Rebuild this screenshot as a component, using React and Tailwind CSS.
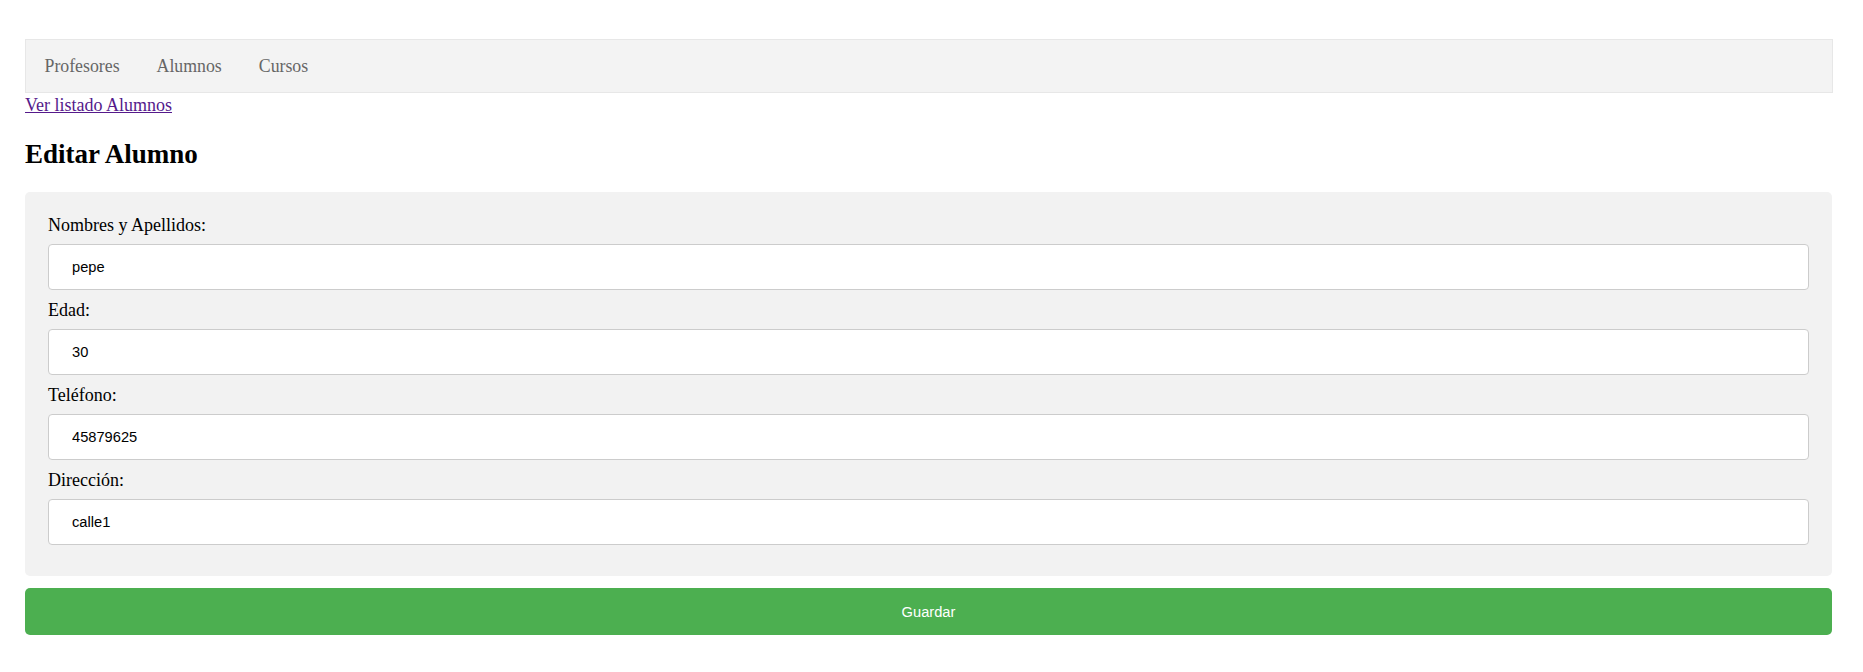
import React from "react";

const serif = { fontFamily: '"Liberation Serif", "Times New Roman", serif' };

function Field({ label, value }) {
  return (
    <div className="flex flex-col">
      <label className="text-[18px] leading-[20px] text-black" style={serif}>
        {label}
      </label>
      <input
        readOnly
        value={value}
        className="mt-[9px] h-[46px] w-full rounded-[4px] border border-[#cccccc] bg-white pl-[23px] text-[14.67px] text-black outline-none font-['Liberation_Sans',Arial,sans-serif]"
      />
    </div>
  );
}

export default function App() {
  return (
    <div className="min-h-[672px] bg-white pt-[39px]" style={serif}>
      <div className="ml-[25px] w-[1808px]">
        <nav className="flex h-[54px] items-center border border-[#e7e7e7] bg-[#f3f3f3] text-[17.8px] text-[#666666]">
          <a className="px-[18.5px] leading-[20px]">Profesores</a>
          <a className="px-[18.5px] leading-[20px]">Alumnos</a>
          <a className="px-[18.5px] leading-[20px]">Cursos</a>
        </nav>
        <div className="pt-px">
          <a href="#" className="text-[18px] leading-[20px] text-[#551a8b] underline">
            Ver listado Alumnos
          </a>
        </div>
        <h2 className="mt-[21px] text-[27px] font-bold leading-[30px] text-black">Editar Alumno</h2>
        <div className="mt-[23px] w-[1807px] rounded-[5px] bg-[#f2f2f2] px-[23px] pt-[23px] pb-[31px]">
          <div className="flex flex-col gap-[10px]">
            <Field label="Nombres y Apellidos:" value="pepe" />
            <Field label="Edad:" value="30" />
            <Field label="Teléfono:" value="45879625" />
            <Field label="Dirección:" value="calle1" />
          </div>
        </div>
        <button className="mt-[12px] flex h-[47px] w-[1807px] items-center justify-center rounded-[5px] bg-[#4caf50] text-[14.67px] text-white font-['Liberation_Sans',Arial,sans-serif]">
          Guardar
        </button>
      </div>
    </div>
  );
}
